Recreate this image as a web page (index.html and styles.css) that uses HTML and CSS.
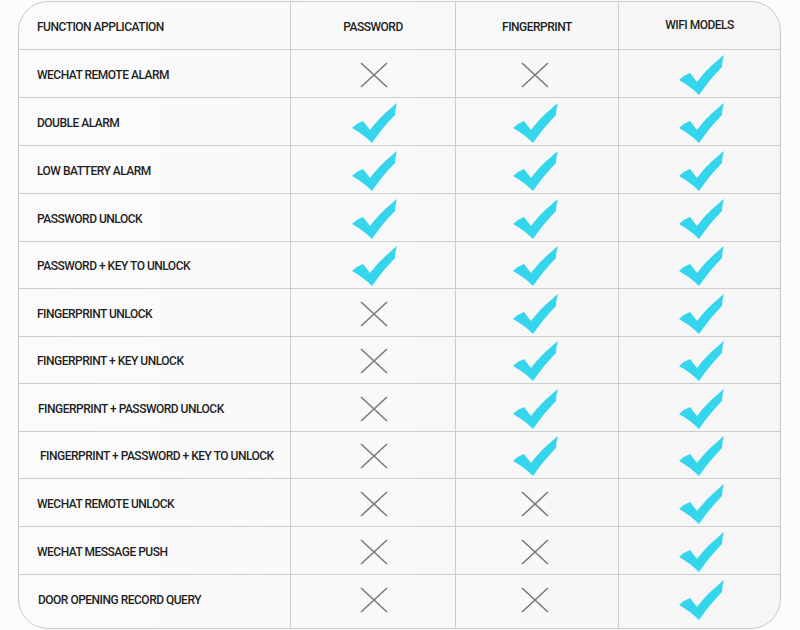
FILE: index.html
```
<!DOCTYPE html>
<html>
<head>
<meta charset="utf-8">
<link rel="stylesheet" href="styles.css">
</head>
<body>
<svg width="0" height="0" class="defs">
  <defs>
    <symbol id="chk" viewBox="0 0 46 40">
      <path d="M0 25 Q5 20 11 18 L18 27 Q27 15 38 6 Q41 3 45 0 Q43 6 43 12 Q31 24 20 40 Q11 31 0 25 Z" fill="#33d6ec"/>
    </symbol>
    <symbol id="x" viewBox="0 0 28 26">
      <path d="M1 1 L27 25 M27 1 L1 25" stroke="#7a7a7a" stroke-width="1.6" fill="none"/>
    </symbol>
  </defs>
</svg>
<div class="tbl">
  <div class="c lab hd">FUNCTION APPLICATION</div>
  <div class="c hd ctr">PASSWORD</div>
  <div class="c hd ctr f">FINGERPRINT</div>
  <div class="c hd ctr up last">WIFI MODELS</div>

  <div class="c lab">WECHAT REMOTE ALARM</div>
  <div class="c ctr"><svg class="ix"><use href="#x"/></svg></div>
  <div class="c ctr f"><svg class="ix"><use href="#x"/></svg></div>
  <div class="c ctr last"><svg class="ic"><use href="#chk"/></svg></div>

  <div class="c lab">DOUBLE ALARM</div>
  <div class="c ctr"><svg class="ic"><use href="#chk"/></svg></div>
  <div class="c ctr f"><svg class="ic"><use href="#chk"/></svg></div>
  <div class="c ctr last"><svg class="ic"><use href="#chk"/></svg></div>

  <div class="c lab">LOW BATTERY ALARM</div>
  <div class="c ctr"><svg class="ic"><use href="#chk"/></svg></div>
  <div class="c ctr f"><svg class="ic"><use href="#chk"/></svg></div>
  <div class="c ctr last"><svg class="ic"><use href="#chk"/></svg></div>

  <div class="c lab">PASSWORD UNLOCK</div>
  <div class="c ctr"><svg class="ic"><use href="#chk"/></svg></div>
  <div class="c ctr f"><svg class="ic"><use href="#chk"/></svg></div>
  <div class="c ctr last"><svg class="ic"><use href="#chk"/></svg></div>

  <div class="c lab">PASSWORD + KEY TO UNLOCK</div>
  <div class="c ctr"><svg class="ic"><use href="#chk"/></svg></div>
  <div class="c ctr f"><svg class="ic"><use href="#chk"/></svg></div>
  <div class="c ctr last"><svg class="ic"><use href="#chk"/></svg></div>

  <div class="c lab">FINGERPRINT UNLOCK</div>
  <div class="c ctr"><svg class="ix"><use href="#x"/></svg></div>
  <div class="c ctr f"><svg class="ic"><use href="#chk"/></svg></div>
  <div class="c ctr last"><svg class="ic"><use href="#chk"/></svg></div>

  <div class="c lab">FINGERPRINT + KEY UNLOCK</div>
  <div class="c ctr"><svg class="ix"><use href="#x"/></svg></div>
  <div class="c ctr f"><svg class="ic"><use href="#chk"/></svg></div>
  <div class="c ctr last"><svg class="ic"><use href="#chk"/></svg></div>

  <div class="c lab in1">FINGERPRINT + PASSWORD UNLOCK</div>
  <div class="c ctr"><svg class="ix"><use href="#x"/></svg></div>
  <div class="c ctr f"><svg class="ic"><use href="#chk"/></svg></div>
  <div class="c ctr last"><svg class="ic"><use href="#chk"/></svg></div>

  <div class="c lab in2">FINGERPRINT + PASSWORD + KEY TO UNLOCK</div>
  <div class="c ctr"><svg class="ix"><use href="#x"/></svg></div>
  <div class="c ctr f"><svg class="ic"><use href="#chk"/></svg></div>
  <div class="c ctr last"><svg class="ic"><use href="#chk"/></svg></div>

  <div class="c lab">WECHAT REMOTE UNLOCK</div>
  <div class="c ctr"><svg class="ix"><use href="#x"/></svg></div>
  <div class="c ctr f"><svg class="ix"><use href="#x"/></svg></div>
  <div class="c ctr last"><svg class="ic"><use href="#chk"/></svg></div>

  <div class="c lab">WECHAT MESSAGE PUSH</div>
  <div class="c ctr"><svg class="ix"><use href="#x"/></svg></div>
  <div class="c ctr f"><svg class="ix"><use href="#x"/></svg></div>
  <div class="c ctr last"><svg class="ic"><use href="#chk"/></svg></div>

  <div class="c lab in1 bot">DOOR OPENING RECORD QUERY</div>
  <div class="c ctr bot"><svg class="ix"><use href="#x"/></svg></div>
  <div class="c ctr f bot"><svg class="ix"><use href="#x"/></svg></div>
  <div class="c ctr last bot"><svg class="ic"><use href="#chk"/></svg></div>
</div>
</body>
</html>
```
FILE: styles.css
```
html, body {
  margin: 0;
  padding: 0;
  background: #fcfcfc;
}
body {
  width: 800px;
  height: 630px;
  padding-top: 1px;
  padding-left: 18px;
  box-sizing: border-box;
  font-family: Roboto, "Liberation Sans", sans-serif;
}
.defs {
  position: absolute;
  width: 0;
  height: 0;
}
.tbl {
  width: 763px;
  height: 628px;
  box-sizing: border-box;
  border: 1px solid #c9c9c9;
  border-radius: 30px;
  overflow: hidden;
  background: linear-gradient(90deg, #fbfbfb 0%, #f6f6f6 100%);
  display: grid;
  grid-template-columns: 272px 165px 163px 161px;
  grid-template-rows: 48px 48px 48px 48px 48px 47px 48px 47px 48px 47px 48px 48px 53px;
}
.c {
  border-right: 1px solid #cdcdcd;
  border-bottom: 1px solid #cdcdcd;
  display: flex;
  align-items: center;
  padding-top: 2px;
  box-sizing: border-box;
  font-size: 12px;
  font-weight: 500;
  letter-spacing: -0.5px;
  color: #1f1f1f;
}
.last { border-right: none; }
.bot { border-bottom: none; padding-top: 0; padding-bottom: 4px; }
.lab { padding-left: 18px; }
.in1 { padding-left: 19px; }
.in2 { padding-left: 21px; }
.ctr { justify-content: center; }
.f { padding-right: 6px; }
.hd.f { padding-right: 0; }
.hd.up { padding-top: 0; padding-bottom: 2px; }
.ic {
  width: 46px;
  height: 40px;
  margin-left: 4px;
}
.ix {
  width: 28px;
  height: 26px;
  margin-left: 2px;
}
```
